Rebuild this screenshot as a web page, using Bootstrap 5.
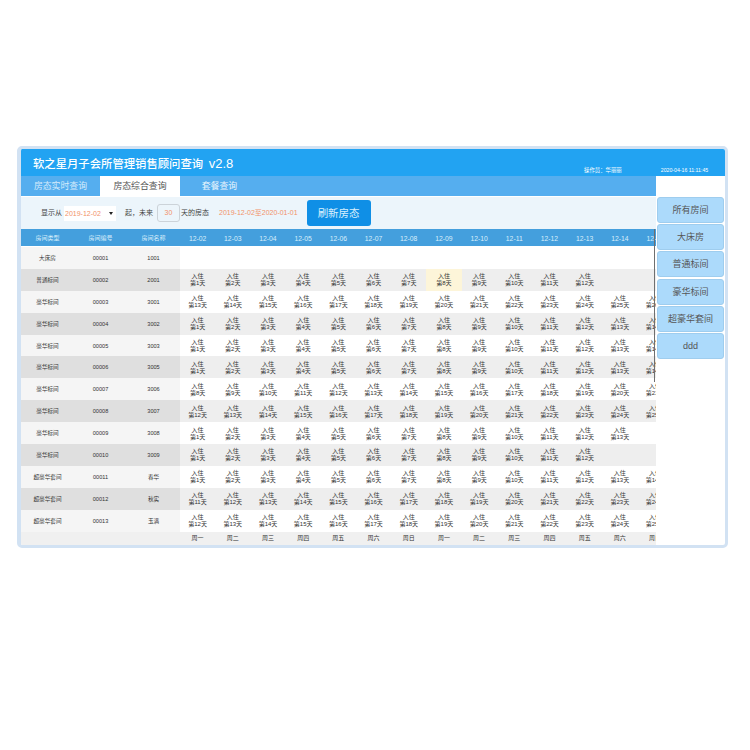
<!doctype html>
<html lang="zh">
<head>
<meta charset="utf-8">
<title>房态综合查询</title>
<link href="https://cdn.jsdelivr.net/npm/bootstrap@5.3.0/dist/css/bootstrap.min.css" rel="stylesheet">
<style>
html,body{background:#fff;height:100%}
body{font-family:"Liberation Sans","Noto Sans CJK SC",sans-serif;color:#444;padding:146px 0 0 17px}
.frame{width:711px;height:402px;border:solid #d2e2f3;border-width:3px 3px 3px 4px;border-radius:5px;background:#fff;overflow:hidden}
.top-band{height:27px;background:#22a3f2;color:#fff;padding:7px 0 0 12px}
.app-title{font-size:11.35px;line-height:16px;font-weight:500;margin:0;width:200px;flex:none;white-space:nowrap}
.app-title span{font-size:13px;font-weight:400;margin-left:2px}
.op{font-size:5.4px;line-height:7px;position:relative;top:11px;white-space:nowrap}
.op1{margin-left:351px}.op2{margin-left:39px;font-size:5.2px}
.body-wrap{height:369px}
.main-col{width:635px;flex:none;position:relative}
.tabbar{height:20px;background:#55aeef}
.tabx{font-size:8.9px;line-height:20px;text-align:center;color:#d5ebfb;flex:none;white-space:nowrap}
.t1{width:79px}.t2{width:80px;background:#fff;color:#555}.t3{width:79px;color:#e6f4fd}
.toolbar{height:32px;margin-top:1px;background:#ecf5fb;font-size:7px;color:#444;padding-left:20px}
.toolbar>*{flex:none;white-space:nowrap}
.picker{width:52px;height:15px;background:#fff;margin-left:2px;color:#f2926a;line-height:15px;padding-left:1px;position:relative}
.picker i{position:absolute;right:3px;top:6px;border:2px solid transparent;border-top:3px solid #222;border-bottom:0}
.gap-after{margin-left:9px}
.numbox{width:23px;height:18px;border:1px solid #ccd3d9;border-radius:3px;text-align:center;line-height:16px;color:#f2926a;margin:0 1px 0 4px}
.range{color:#f2926a;margin-left:10px}
.refresh{width:64px;height:26px;margin-left:9px;padding:0;background:#0f8fe6;border:0;border-radius:3px;color:#d9effd;font-size:10.5px;line-height:26px}
.grid-clip{height:316px;overflow:hidden;width:635px}
.room-table{table-layout:fixed;width:651.8px;margin:0;font-size:6px;line-height:7px;--bs-table-bg:transparent;color:#333}
.room-table th,.room-table td{padding:0;text-align:center;vertical-align:middle;overflow:hidden;white-space:nowrap;border:0;color:#333}
.room-table .hd th{height:17px;padding-top:1px;background:#449fdd;color:#d9eefb;font-weight:400;font-size:6px}
.room-table .hd th.dt{font-size:6.8px}
.room-table .sep td{height:1px}
.room-table tbody tr.rw td{height:21.9px;padding-top:1px;background:#fff}
.room-table tbody tr.rw td.lb{background:#f5f5f5;font-size:5.6px}
.room-table tbody tr.rw:nth-child(even) td{background:#eee}
.room-table tbody tr.rw:nth-child(even) td.lb{background:#dfdfdf}
.room-table tbody tr.rw td.today{background:#fdf5d9}
.room-table tbody tr.ft td{height:14px;background:#f0f0f0;font-size:6px}
.col-lb{width:53px}.col-dt{width:35.2px}
.vline{position:absolute;left:633px;top:53px;width:1px;height:153px;background:#6f6f6f}
.side-col{width:68px;padding:21px 0 0 1px}
.room-btn{display:block;width:67px;height:26px;margin-bottom:1.2px;padding:0;background:#acdafb;border:1px solid #9fcdee;border-radius:3px;color:#555;font-size:9px;line-height:24px}
</style>
</head>
<body>
<div class="frame">
  <div class="top-band d-flex">
    <h1 class="app-title">软之星月子会所管理销售顾问查询<span> v2.8</span></h1>
    <span class="op op1">操作员：华丽丽</span>
    <span class="op op2">2020-04-16 11:11:45</span>
  </div>
  <div class="body-wrap d-flex">
    <div class="main-col">
      <div class="tabbar d-flex">
        <div class="tabx t1">房态实时查询</div>
        <div class="tabx t2">房态综合查询</div>
        <div class="tabx t3">套餐查询</div>
      </div>
      <div class="toolbar d-flex align-items-center">
        <span>显示从</span>
        <div class="picker">2019-12-02<i></i></div>
        <span class="gap-after">起，未来</span>
        <div class="numbox">30</div>
        <span>天的房态</span>
        <span class="range">2019-12-02至2020-01-01</span>
        <button type="button" class="btn refresh">刷新房态</button>
      </div>
      <div class="grid-clip">
        <table class="table room-table" id="grid"></table>
      </div>
      <div class="vline"></div>
    </div>
    <div class="side-col">
      <button type="button" class="btn room-btn">所有房间</button>
      <button type="button" class="btn room-btn">大床房</button>
      <button type="button" class="btn room-btn">普通标间</button>
      <button type="button" class="btn room-btn">豪华标间</button>
      <button type="button" class="btn room-btn">超豪华套间</button>
      <button type="button" class="btn room-btn">ddd</button>
    </div>
  </div>
</div>
<script>
var rows=[
["大床房","00001","1001",0,0],
["普通标间","00002","2001",1,12],
["豪华标间","00003","3001",13,14],
["豪华标间","00004","3002",1,14],
["豪华标间","00005","3003",1,14],
["豪华标间","00006","3005",1,14],
["豪华标间","00007","3006",8,14],
["豪华标间","00008","3007",12,14],
["豪华标间","00009","3008",1,13],
["豪华标间","00010","3009",1,12],
["超豪华套间","00011","春华",1,14],
["超豪华套间","00012","秋实",11,14],
["超豪华套间","00013","玉满",12,14]];
var wk=["周一","周二","周三","周四","周五","周六","周日"];
var h='<colgroup><col class="col-lb"><col class="col-lb"><col class="col-lb">';
for(var i=0;i<14;i++)h+='<col class="col-dt">';
h+='</colgroup><thead><tr class="hd"><th>房间类型</th><th>房间编号</th><th>房间名称</th>';
for(i=2;i<=15;i++)h+='<th class="dt">12-'+(i<10?'0':'')+i+'</th>';
h+='</tr><tr class="sep"><td colspan="17"></td></tr></thead><tbody>';
rows.forEach(function(r,idx){
  h+='<tr class="rw"><td class="lb">'+r[0]+'</td><td class="lb">'+r[1]+'</td><td class="lb">'+r[2]+'</td>';
  for(var c=0;c<14;c++){
    var on=r[3]>0&&c<r[4];
    h+='<td'+(idx==1&&c==7?' class="today"':'')+'>'+(on?'入住<br>第'+(r[3]+c)+'天':'')+'</td>';
  }
  h+='</tr>';
});
h+='<tr class="ft"><td></td><td></td><td></td>';
for(i=0;i<14;i++)h+='<td>'+wk[i%7]+'</td>';
h+='</tr></tbody>';
document.getElementById('grid').innerHTML=h;
</script>
<script src="https://cdn.jsdelivr.net/npm/bootstrap@5.3.0/dist/js/bootstrap.bundle.min.js"></script>
</body>
</html>
